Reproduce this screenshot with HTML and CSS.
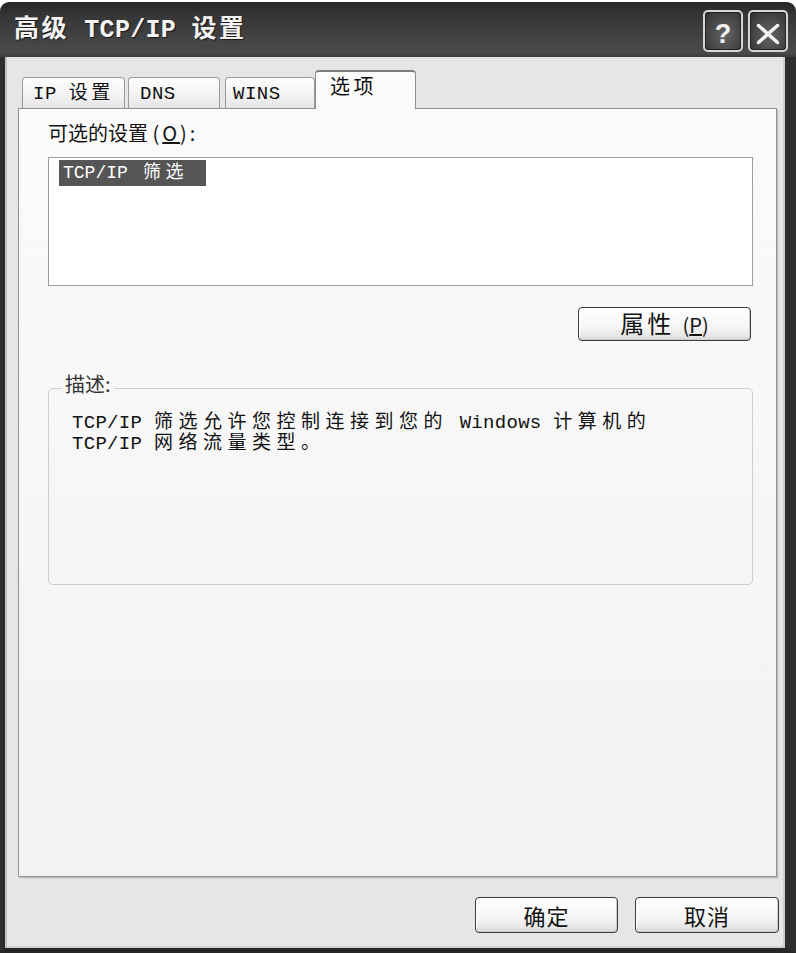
FILE: index.html
```html
<!DOCTYPE html>
<html lang="zh-CN">
<head>
<meta charset="utf-8">
<title>高级 TCP/IP 设置</title>
<link rel="stylesheet" href="styles.css">
</head>
<body>
<div class="window">
  <div class="titlebar">
    <div class="title">高级<span class="m"> TCP/IP </span>设置</div>
    <div class="tb-btns">
      <div class="tb-btn help">?</div>
      <div class="tb-btn close">
        <svg width="26" height="22" viewBox="0 0 26 22"><path d="M3.5 2.5 L22.5 19.5 M22.5 2.5 L3.5 19.5" stroke="#f4f4f4" stroke-width="3.4" stroke-linecap="round" fill="none"/></svg>
      </div>
    </div>
  </div>
  <div class="client">
    <div class="tabs">
      <div class="tab t1"><span class="m">IP </span>设置</div>
      <div class="tab t2"><span class="m">DNS</span></div>
      <div class="tab t3"><span class="m">WINS</span></div>
      <div class="tab active">选项</div>
    </div>
    <div class="panel">
      <div class="label">可选的设置 <span class="acc">(<u>O</u>):</span></div>
      <div class="listbox">
        <div class="item"><span class="m">TCP/IP</span> 筛选</div>
      </div>
      <div class="prop-row">
        <button class="btn prop">属性 <span class="acc">(<u>P</u>)</span></button>
      </div>
      <fieldset class="group">
        <legend>描述:</legend>
        <p class="desc"><span class="m">TCP/IP </span>筛选允许您控制连接到您的<span class="m"> Windows </span>计算机的<br><span class="m">TCP/IP </span>网络流量类型。</p>
      </fieldset>
    </div>
    <div class="footer">
      <button class="btn ok">确定</button>
      <button class="btn cancel">取消</button>
    </div>
  </div>
</div>
</body>
</html>
```

FILE: styles.css
```css
* { box-sizing: border-box; }
html, body { margin: 0; padding: 0; background: #ffffff; }
body {
  width: 796px;
  height: 953px;
  overflow: hidden;
  font-family: "Noto Sans CJK SC", sans-serif;
}

.window {
  margin-top: 2px;
  height: 951px;
  display: flex;
  flex-direction: column;
}

/* ---------- title bar ---------- */
.titlebar {
  flex: none;
  height: 55px;
  display: flex;
  align-items: center;
  justify-content: space-between;
  padding: 3px 8px 0 14px;
  border-radius: 9px 9px 0 0;
  background: linear-gradient(#262626, #363636 25%, #444444 70%, #4a4a4a 92%, #3a3a3a);
}
.title {
  color: #f3f3f3;
  font-family: "Liberation Mono", "Noto Sans CJK SC", monospace;
  font-weight: 700;
  font-size: 25px;
  line-height: 30px;
  letter-spacing: 2.5px;
  white-space: nowrap;
  text-shadow: 1px 1px 1px #1a1a1a;
}
.title .m { letter-spacing: 0.3px; }

.tb-btns { display: flex; gap: 5px; }
.tb-btn {
  width: 40px;
  height: 42px;
  border: 2px solid #d6d6d6;
  border-radius: 5px;
  background: radial-gradient(ellipse at 55% 60%, #646464, #474747 55%, #2f2f2f);
  box-shadow: inset 0 0 0 1px #222;
  display: flex;
  align-items: center;
  justify-content: center;
  padding-top: 6px;
  color: #f4f4f4;
}
.help {
  font-family: "Liberation Sans", sans-serif;
  font-weight: 700;
  font-size: 27px;
  line-height: 30px;
}

/* ---------- client area ---------- */
.client {
  flex: 1;
  display: flex;
  flex-direction: column;
  background: #e6e6e6;
  border-left: 5px solid #2e2e2e;
  border-right: 11px solid #2e2e2e;
  border-bottom: 5px solid #262626;
  padding: 13px 8px 0 13px;
  box-shadow: inset 2px 0 0 #c4c4c4, inset -2px 0 0 #cdcdcd, inset 0 -2px 0 #cfcfcf;
}

/* ---------- tabs ---------- */
.tabs {
  position: relative;
  z-index: 1;
  flex: none;
  height: 38px;
  display: flex;
  align-items: flex-end;
  padding-left: 4px;
  font-family: "Liberation Mono", "Noto Sans CJK SC", monospace;
  font-size: 19px;
  letter-spacing: 3.5px;
  color: #101010;
}
.tab {
  height: 31px;
  border: 1px solid #9b9b9b;
  border-bottom: none;
  border-radius: 4px 4px 0 0;
  background: linear-gradient(#fdfdfd, #f3f3f3 55%, #e5e5e5);
  padding-top: 4px;
  line-height: 24px;
  white-space: nowrap;
}
.tab .m { letter-spacing: 0.5px; }
.t1 { width: 103px; padding-left: 10px; margin-right: 3px; }
.t2 { width: 92px; padding-left: 11px; margin-right: 5px; }
.t3 { width: 90px; padding-left: 7px; }
.tab.active {
  width: 101px;
  height: 39px;
  margin-bottom: -1px;
  padding-left: 14px;
  padding-top: 5px;
  font-size: 20px;
  background: linear-gradient(#fcfcfc, #fafafa);
  border-color: #8e8e8e;
  border-top: 2px solid #7c7c7c;
}

/* ---------- panel ---------- */
.panel {
  flex: none;
  height: 769px;
  display: flex;
  flex-direction: column;
  background: linear-gradient(#fbfbfb, #f2f2f2);
  border: 1px solid #919191;
  box-shadow: 1px 1px 0 #c2c2c2, 2px 2px 0 #d6d6d6;
  padding: 12px 23px 0 29px;
}
.label {
  font-size: 20px;
  line-height: 24px;
  color: #141414;
  white-space: nowrap;
}
.label .acc { font-size: 20px; letter-spacing: 3px; }

.listbox {
  margin-top: 12px;
  height: 129px;
  background: #ffffff;
  border: 1px solid #9d9d9d;
  padding: 2px 0 0 10px;
}
.item {
  width: 147px;
  height: 26px;
  background: #555555;
  color: #ffffff;
  font-family: "Liberation Mono", "Noto Sans CJK SC", monospace;
  font-size: 18px;
  line-height: 26px;
  letter-spacing: 4.5px;
  padding-left: 4px;
  white-space: nowrap;
}
.item .m { letter-spacing: 0; }

.prop-row {
  display: flex;
  justify-content: flex-end;
  margin-top: 21px;
  margin-right: 2px;
}

.btn {
  font-family: "Noto Sans CJK SC", sans-serif;
  color: #121212;
  border: 1px solid #3c3c3c;
  border-radius: 4px;
  background: linear-gradient(#ffffff, #f5f5f5 60%, #e6e6e6 88%, #d4d4d4);
  box-shadow: inset -1px -1px 0 #cdcdcd, inset 1px 1px 0 #ffffff;
  padding: 0;
  white-space: nowrap;
}
.prop {
  width: 173px;
  height: 34px;
  font-size: 24px;
  line-height: 30px;
  letter-spacing: 3px;
}
.prop .acc { font-size: 20px; letter-spacing: 0; }

/* ---------- group box ---------- */
.group {
  margin: 32px 0 0 0;
  padding: 0;
  min-width: 0;
  border: 1px solid #cdcdcd;
  border-radius: 5px;
}
.group legend {
  margin-left: 13px;
  padding: 0 3px 8px;
  font-size: 20px;
  line-height: 22px;
  color: #333333;
}
.desc {
  margin: 10px 0 129px 23px;
  font-family: "Liberation Mono", "Noto Sans CJK SC", monospace;
  font-size: 19px;
  line-height: 21px;
  letter-spacing: 5.5px;
  white-space: nowrap;
  color: #111111;
}
.desc .m { letter-spacing: 0.3px; }

/* ---------- footer ---------- */
.footer {
  display: flex;
  justify-content: flex-end;
  gap: 17px;
  margin-top: 20px;
  margin-right: -2px;
}
.footer .btn {
  height: 36px;
  font-size: 22px;
  line-height: 30px;
  letter-spacing: 1px;
}
.ok { width: 143px; }
.cancel { width: 144px; }
```
